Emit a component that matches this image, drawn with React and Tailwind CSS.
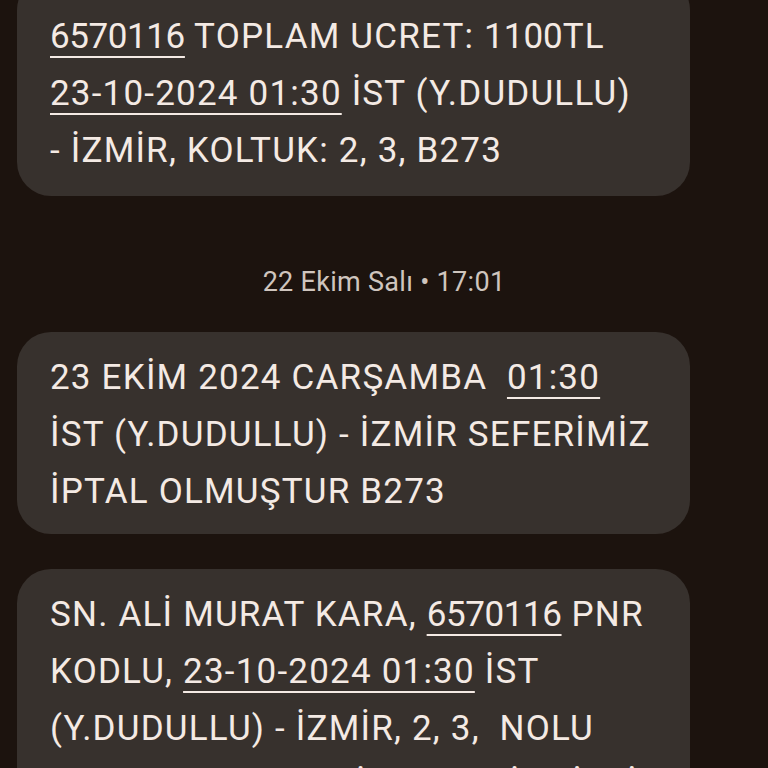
const U = ({ children, tight = false }) => (
  <span
    className={`underline decoration-2 underline-offset-[8px] ${tight ? 'tracking-[-0.4px]' : ''}`}
  >
    {children}
  </span>
);

function Bubble({ lines, className = '' }) {
  return (
    <div className={`w-[673px] rounded-[34px] bg-[#37312d] pl-[33px] pr-4 ${className}`}>
      {lines.map((line, i) => (
        <div
          key={i}
          className="whitespace-pre text-[35px] leading-[57px] tracking-[1.2px] text-[#f4eae4]"
        >
          {line}
        </div>
      ))}
    </div>
  );
}

export default function App() {
  return (
    <div
      className="h-[768px] w-[768px] overflow-hidden bg-[#1c130e] px-[17px]"
      style={{ fontFamily: 'Roboto, "Liberation Sans", sans-serif' }}
    >
      <Bubble
        className="-mt-[24px] pt-[32px] pb-[17px]"
        lines={[
          <><U tight>6570116</U> TOPLAM UCRET: <span className="tracking-[0px]">1100</span>TL</>,
          <><U>23-10-2024 01:30</U> İST (Y.DUDULLU)</>,
          <>- İZMİR, KOLTUK: 2, 3, B273</>,
        ]}
      />

      <div className="mt-[68px] mb-[32px] text-center text-[27px] leading-[36px] tracking-[0.3px] text-[#cfc5be]">
        22 Ekim Salı • 17:01
      </div>

      <Bubble
        className="pt-[17px] pb-[14px]"
        lines={[
          <>23 EKİM 2024 CARŞAMBA  <U>01:30</U></>,
          <>İST (Y.DUDULLU) - İZMİR SEFERİMİZ</>,
          <>İPTAL OLMUŞTUR B273</>,
        ]}
      />

      <Bubble
        className="mt-[35px] pt-[17px] pb-[14px]"
        lines={[
          <>SN. ALİ MURAT KARA, <U tight>6570116</U> PNR</>,
          <>KODLU, <U>23-10-2024 01:30</U> İST</>,
          <>(Y.DUDULLU) - İZMİR, 2, 3,  NOLU</>,
          <>KOLTUK(LAR)INIZ İPTAL EDİLMİŞTİR.</>,
        ]}
      />
    </div>
  );
}
